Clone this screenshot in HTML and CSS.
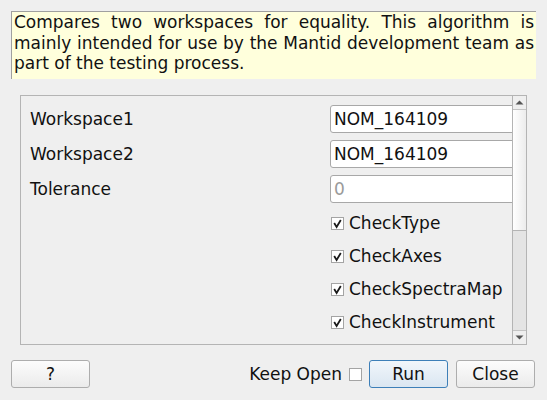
FILE: index.html
```html
<!DOCTYPE html>
<html>
<head>
<meta charset="utf-8">
<link rel="stylesheet" href="styles.css">
</head>
<body>
<div class="dialog">
  <div class="desc">Compares two workspaces for equality. This algorithm is mainly intended for use by the Mantid development team as part of the testing process.</div>
  <div class="panel">
    <div class="content">
      <div class="row">
        <span class="label">Workspace1</span>
        <div class="input">NOM_164109</div>
      </div>
      <div class="row">
        <span class="label">Workspace2</span>
        <div class="input">NOM_164109</div>
      </div>
      <div class="row">
        <span class="label">Tolerance</span>
        <div class="input placeholder">0</div>
      </div>
      <div class="check-row"><span class="cb checked"><svg viewBox="0 0 13 13" width="13" height="13"><path d="M3.2 6 L5.6 10 L9.8 3" fill="none" stroke="#1a1a1a" stroke-width="1.8"/></svg></span><span>CheckType</span></div>
      <div class="check-row"><span class="cb checked"><svg viewBox="0 0 13 13" width="13" height="13"><path d="M3.2 6 L5.6 10 L9.8 3" fill="none" stroke="#1a1a1a" stroke-width="1.8"/></svg></span><span>CheckAxes</span></div>
      <div class="check-row"><span class="cb checked"><svg viewBox="0 0 13 13" width="13" height="13"><path d="M3.2 6 L5.6 10 L9.8 3" fill="none" stroke="#1a1a1a" stroke-width="1.8"/></svg></span><span>CheckSpectraMap</span></div>
      <div class="check-row"><span class="cb checked"><svg viewBox="0 0 13 13" width="13" height="13"><path d="M3.2 6 L5.6 10 L9.8 3" fill="none" stroke="#1a1a1a" stroke-width="1.8"/></svg></span><span>CheckInstrument</span></div>
    </div>
    <div class="scrollbar">
      <div class="arrow"><svg width="9" height="5" viewBox="0 0 9 5"><path d="M0.5 4.5 L4.5 0.5 L8.5 4.5 Z" fill="#555"/></svg></div>
      <div class="handle"></div>
      <div class="track"></div>
      <div class="arrow down"><svg width="9" height="5" viewBox="0 0 9 5"><path d="M0.5 0.5 L8.5 0.5 L4.5 4.5 Z" fill="#555"/></svg></div>
    </div>
  </div>
  <div class="buttons">
    <button class="btn">?</button>
    <div class="spacer"></div>
    <span class="keep">Keep Open</span>
    <span class="cb keep-cb"></span>
    <button class="btn run">Run</button>
    <button class="btn">Close</button>
  </div>
</div>
</body>
</html>
```
FILE: styles.css
```css
html, body {
  margin: 0;
  padding: 0;
  background: #efefef;
}
body {
  font-family: "DejaVu Sans", sans-serif;
  font-size: 17px;
  color: #111;
  width: 547px;
  height: 400px;
  overflow: hidden;
}
.dialog {
  display: flex;
  flex-direction: column;
  padding-top: 11px;
}
.desc {
  margin-left: 11px;
  width: 520px;
  height: 67px;
  padding: 0 2px 0 2px;
  background: #ffffdc;
  border-top: 1px solid #a0a0a0;
  border-left: 1px solid #a0a0a0;
  text-align: justify;
  line-height: 20.5px;
  box-sizing: content-box;
  overflow: hidden;
}
.panel {
  margin-top: 16px;
  margin-left: 20px;
  width: 505px;
  height: 248px;
  border: 1px solid #b4b4b4;
  display: flex;
}
.content {
  flex: 1;
  overflow: hidden;
  padding-top: 9px;
  display: flex;
  flex-direction: column;
  gap: 7px;
}
.row {
  display: flex;
  align-items: center;
  height: 28px;
}
.label {
  width: 300px;
  padding-left: 9px;
  flex: none;
}
.input {
  flex: none;
  width: 220px;
  height: 26px;
  border: 1px solid #a8a8a8;
  border-radius: 3px;
  background: #fff;
  padding-left: 3px;
  line-height: 26px;
  box-sizing: content-box;
}
.placeholder {
  color: #9a9a9a;
}
.check-row {
  display: flex;
  align-items: center;
  height: 26px;
  padding-left: 310px;
  gap: 5px;
}
.cb {
  width: 11px;
  height: 11px;
  border: 1px solid #a4a4a4;
  background: #fff;
  display: inline-flex;
  align-items: center;
  justify-content: center;
  flex: none;
}
.cb svg {
  display: block;
  flex: none;
}
.scrollbar {
  width: 13px;
  flex: none;
  border-left: 1px solid #b4b4b4;
  display: flex;
  flex-direction: column;
}
.arrow {
  height: 13px;
  border-bottom: 1px solid #c4c4c4;
  display: flex;
  align-items: center;
  justify-content: center;
  background: #efefef;
}
.arrow.down {
  border-bottom: none;
  border-top: 1px solid #c4c4c4;
}
.handle {
  height: 120px;
  background: linear-gradient(to right, #ffffff, #ececec);
  border-bottom: 1px solid #b4b4b4;
}
.track {
  flex: 1;
  background: #e4e4e4;
}
.buttons {
  display: flex;
  align-items: center;
  margin-top: 15px;
  padding: 0 12px 0 11px;
  height: 28px;
}
.spacer {
  flex: 1;
}
.btn {
  font-family: "DejaVu Sans", sans-serif;
  font-size: 17px;
  color: #111;
  width: 79px;
  height: 28px;
  border: 1px solid #adadad;
  border-radius: 3px;
  background: linear-gradient(to bottom, #fcfcfc, #ebebeb);
  padding: 0;
}
.btn.run {
  border-color: #3d7fb8;
  background: linear-gradient(to bottom, #f1f6fb, #dae6f1);
  margin-right: 8px;
}
.keep {
  margin-right: 7px;
}
.keep-cb {
  margin-right: 7px;
}
```
